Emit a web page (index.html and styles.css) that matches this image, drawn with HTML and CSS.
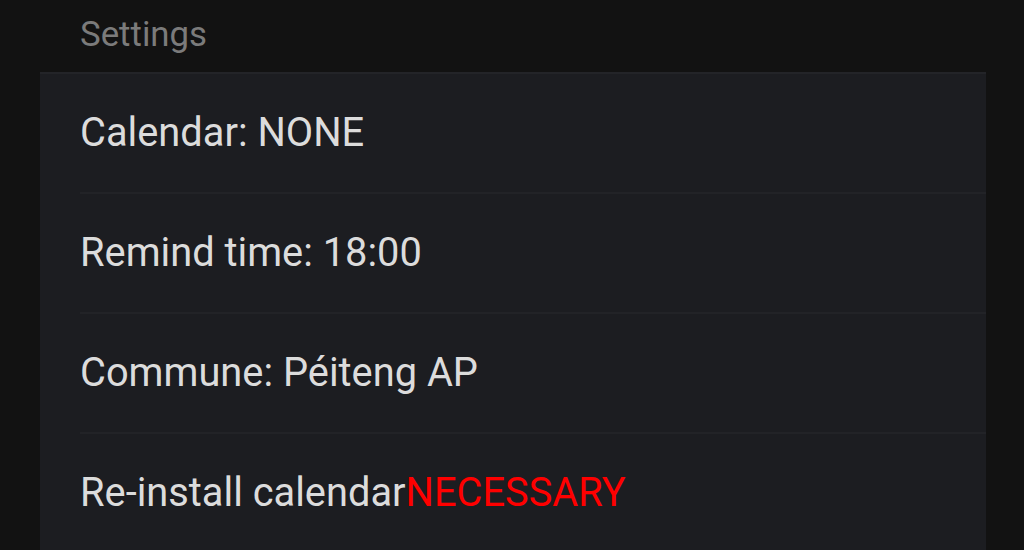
FILE: index.html
```html
<html>
<head>
  <link rel="stylesheet" href="styles.css">
</head>
<body>
  <div class="page">
    <div class="section-title">Settings</div>
    <div class="card">
      <div class="row">Calendar: NONE</div>
      <div class="row">Remind time: 18:00</div>
      <div class="row">Commune: Péiteng AP</div>
      <div class="row">Re-install calendar<span class="alert">NECESSARY</span></div>
    </div>
  </div>
</body>
</html>
```

FILE: styles.css
```css
body {
  margin: 0;
  background-color: #121212;
  font-family: Roboto, "Noto Sans", sans-serif;
  overflow: hidden;
}

.page {
  padding: 0 38px 0 40px;
}

.section-title {
  color: #7b7b7b;
  font-size: 34.8px;
  padding-left: 40px;
  height: 72px;
  line-height: 68px;
}

.card {
  background-color: #1c1d21;
  border-top: 2px solid #232428;
  padding-left: 40px;
}

.row {
  height: 118px;
  line-height: 118px;
  color: #dcdcdc;
  font-size: 39.8px;
  border-bottom: 2px solid #222327;
}

.alert {
  color: #ff0000;
}
```
